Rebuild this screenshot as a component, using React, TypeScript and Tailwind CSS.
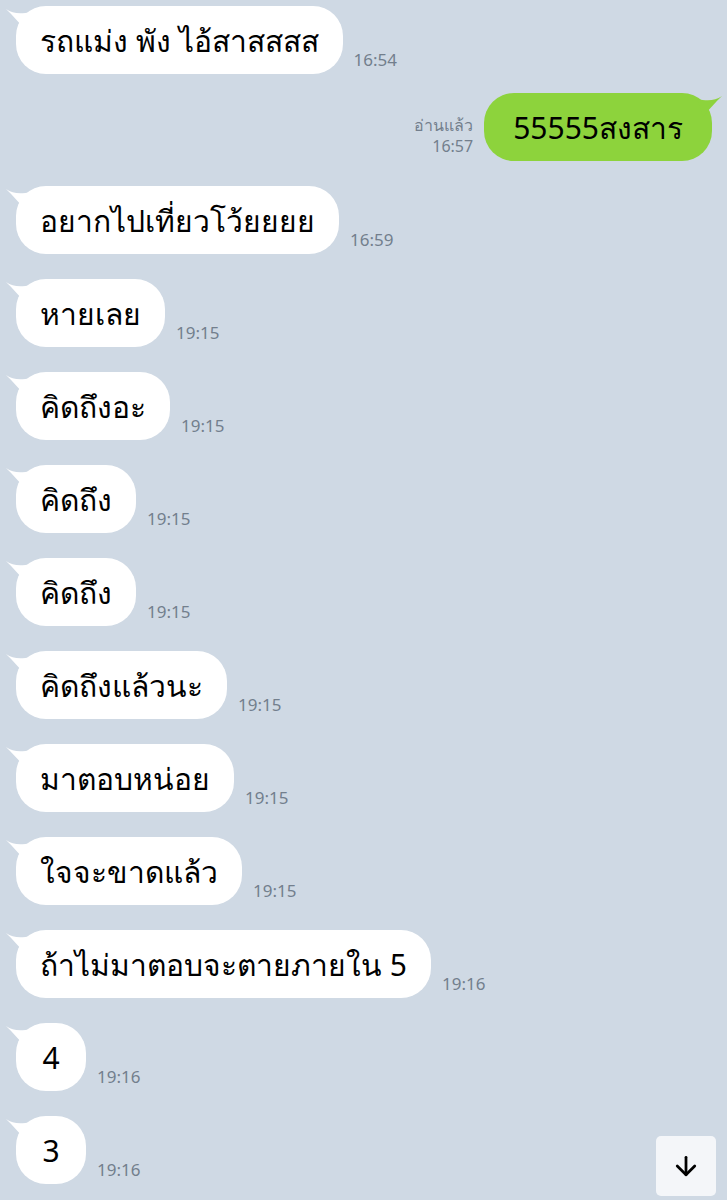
import { ArrowDown } from 'lucide-react';

type Msg = { text: string; time: string; me?: boolean };

const messages: Msg[] = [
    { text: 'รถแม่ง พัง ไอ้สาสสสส', time: '16:54' },
    { text: '55555สงสาร', time: '16:57', me: true },
    { text: 'อยากไปเที่ยวโว้ยยยย', time: '16:59' },
    { text: 'หายเลย', time: '19:15' },
    { text: 'คิดถึงอะ', time: '19:15' },
    { text: 'คิดถึง', time: '19:15' },
    { text: 'คิดถึง', time: '19:15' },
    { text: 'คิดถึงแล้วนะ', time: '19:15' },
    { text: 'มาตอบหน่อย', time: '19:15' },
    { text: 'ใจจะขาดแล้ว', time: '19:15' },
    { text: 'ถ้าไม่มาตอบจะตายภายใน 5', time: '19:16' },
    { text: '4', time: '19:16' },
    { text: '3', time: '19:16' },
];

export default function App() {
    return (
        <div className="relative h-[1200px] w-[727px] overflow-hidden bg-[#cfd9e4] pt-[6px] font-['Noto_Sans','DejaVu_Sans',sans-serif]">
            <div className="flex flex-col gap-[25px]">
                {messages.map((m, i) => (m.me ? <Mine key={i} m={m} /> : <Theirs key={i} m={m} />))}
            </div>
            <button className="absolute right-[11px] bottom-[4px] flex h-[60px] w-[60px] items-center justify-center rounded-[5px] bg-[#f4f6f9]">
                <ArrowDown size={30} strokeWidth={2.2} className="text-black" />
            </button>
        </div>
    );
}

function Theirs({ m }: { m: Msg }) {
    return (
        <div className="flex items-end gap-[11px] pl-4">
            <div className="relative flex h-[68px] min-w-[70px] items-center justify-center rounded-[30px] bg-white px-6 text-[30px] text-black">
                <svg className="absolute -left-[11px] top-[2px]" width="30" height="24" viewBox="0 0 30 24">
                    <path d="M1 1 C8 6 16 6 26 4 L20 22 C14 14 8 8 1 1 Z" fill="#fff" />
                </svg>
                <span className="relative whitespace-nowrap">{m.text}</span>
            </div>
            <span className="mb-[4px] text-[17px] leading-5 text-[#737f8d]">{m.time}</span>
        </div>
    );
}

function Mine({ m }: { m: Msg }) {
    return (
        <div className="-mt-[6px] flex items-end justify-end gap-[11px] pr-[15px]">
            <div className="mb-[4px] flex flex-col items-end text-[16px] leading-[21px] text-[#737f8d]">
                <span>อ่านแล้ว</span>
                <span>{m.time}</span>
            </div>
            <div className="relative flex h-[68px] items-center rounded-[30px] bg-[#8dd33c] px-[29px] text-[30px] text-black">
                <svg className="absolute -right-[11px] top-[2px]" width="30" height="24" viewBox="0 0 30 24">
                    <path d="M29 1 C22 6 14 6 4 4 L10 22 C16 14 22 8 29 1 Z" fill="#8dd33c" />
                </svg>
                <span className="relative whitespace-nowrap">{m.text}</span>
            </div>
        </div>
    );
}
